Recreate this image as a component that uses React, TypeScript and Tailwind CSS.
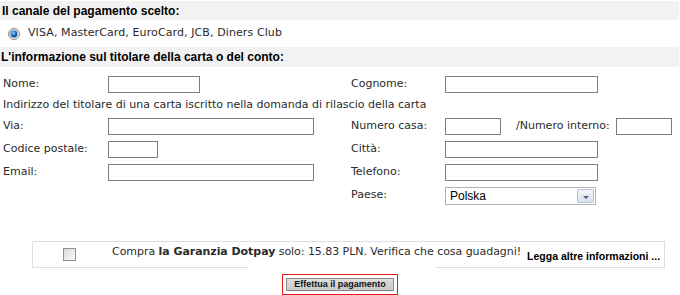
import React from "react";

const Input = ({ w }: { w: string }) => (
  <div className={`${w} h-[17px] border border-[#7f7f7f] bg-white shrink-0`} />
);

export default function App() {
  const font = { fontFamily: '"DejaVu Sans", Verdana, sans-serif' };
  const boldFont = { fontFamily: '"Liberation Sans", Arial, sans-serif' };
  return (
    <div className="w-[680px] h-[295px] bg-white overflow-hidden text-[11px] text-[#2a2a2a] pt-px whitespace-nowrap" style={font}>
      <div className="w-[679px] h-[19px] bg-[#f2f2f2] flex items-center pl-[2px] font-bold text-[12px] text-black" style={boldFont}>
        Il canale del pagamento scelto:
      </div>
      <div className="h-[27px] flex items-center pl-[8px]">
        <svg width="12" height="12" viewBox="0 0 12 12" className="mr-[8px]">
          <defs>
            <radialGradient id="rg" cx="40%" cy="35%" r="70%">
              <stop offset="0%" stopColor="#8fd0ff" />
              <stop offset="55%" stopColor="#1d6fc0" />
              <stop offset="100%" stopColor="#0b3a6e" />
            </radialGradient>
            <linearGradient id="ring" x1="0" y1="0" x2="1" y2="1">
              <stop offset="0%" stopColor="#c9c9c9" />
              <stop offset="100%" stopColor="#f2f2f2" />
            </linearGradient>
          </defs>
          <circle cx="6" cy="6" r="5.5" fill="url(#ring)" stroke="#8c8c8c" strokeWidth="1" />
          <circle cx="6" cy="6" r="3.4" fill="url(#rg)" />
        </svg>
        <span className="tracking-[0.1px]">VISA, MasterCard, EuroCard, JCB, Diners Club</span>
      </div>
      <div className="w-[679px] h-[20px] bg-[#f2f2f2] flex items-center pl-[1px] font-bold text-[12px] text-black" style={boldFont}>
        L'informazione sul titolare della carta o del conto:
      </div>

      <div className="mt-[6px]">
        <div className="flex h-[23px] items-center">
          <div className="w-[105px] ml-[3px]">Nome:</div>
          <div className="w-[243px]"><Input w="w-[92px]" /></div>
          <div className="w-[94px]">Cognome:</div>
          <Input w="w-[153px]" />
        </div>
        <div className="flex h-[19px] items-center pl-[3px]">
          Indirizzo del titolare di una carta iscritto nella domanda di rilascio della carta
        </div>
        <div className="flex h-[23px] items-center">
          <div className="w-[105px] ml-[3px]">Via:</div>
          <div className="w-[243px]"><Input w="w-[206px]" /></div>
          <div className="w-[94px]">Numero casa:</div>
          <Input w="w-[56px]" />
          <div className="w-[115px] pl-[15px] shrink-0">/Numero interno:</div>
          <Input w="w-[56px]" />
        </div>
        <div className="flex h-[23px] items-center">
          <div className="w-[105px] ml-[3px]">Codice postale:</div>
          <div className="w-[243px]"><Input w="w-[50px]" /></div>
          <div className="w-[94px]">Città:</div>
          <Input w="w-[153px]" />
        </div>
        <div className="flex h-[23px] items-center">
          <div className="w-[105px] ml-[3px]">Email:</div>
          <div className="w-[243px]"><Input w="w-[206px]" /></div>
          <div className="w-[94px]">Telefono:</div>
          <Input w="w-[153px]" />
        </div>
        <div className="flex h-[23px] items-center">
          <div className="w-[105px] ml-[3px]"></div>
          <div className="w-[243px]"></div>
          <div className="w-[94px]">Paese:</div>
          <div className="w-[151px] h-[18px] border border-[#b3b3b3] bg-white flex items-center justify-between pl-[4px] pr-px">
            <span className="text-[12px] text-black" style={{ fontFamily: '"Liberation Sans", Arial, sans-serif' }}>Polska</span>
            <div className="w-[17px] h-[14px] border border-[#b7c3dc] rounded-[2px] bg-gradient-to-b from-[#f4f6fb] to-[#d9e0ee] flex items-end justify-center pb-[3px]">
              <svg width="6" height="3" viewBox="0 0 6 3"><path d="M0 0H6L3 3Z" fill="#4d6185" /></svg>
            </div>
          </div>
        </div>
      </div>

      <div className="mt-[34px] ml-[32px] w-[633px]">
        <div className="h-[26px] border-t border-l border-r border-[#dedede] flex items-center">
          <div className="ml-[30px] w-[13px] h-[13px] border border-[#8f8f8f] bg-gradient-to-br from-[#d8d8d8] to-[#fbfbfb] shrink-0" />
          <div className="ml-[36px] flex items-end h-full">
            <span className="mb-[7px] tracking-[-0.05px]">Compra <b>la Garanzia Dotpay</b> solo: 15.83 PLN. Verifica che cosa guadagni!</span>
            <span className="ml-[6px] mb-[2px] font-bold text-black text-[10.5px]" style={boldFont}>Legga altre informazioni ...</span>
          </div>
        </div>
        <div className="flex h-px">
          <div className="w-[217px] bg-[#dedede]" />
          <div className="w-[187px]" />
          <div className="flex-1 bg-[#dedede]" />
        </div>
      </div>

      <div className="mt-[6px] flex justify-center">
        <div className="w-[116px] h-[21px] border border-[#e31b1b] p-[3px]">
          <div className="w-full h-full border border-[#8c8c8c] bg-gradient-to-b from-[#dedede] to-[#c8c8c8] flex items-center justify-center text-[9px] font-bold text-[#111]" style={boldFont}>
            Effettua il pagamento
          </div>
        </div>
      </div>
    </div>
  );
}
